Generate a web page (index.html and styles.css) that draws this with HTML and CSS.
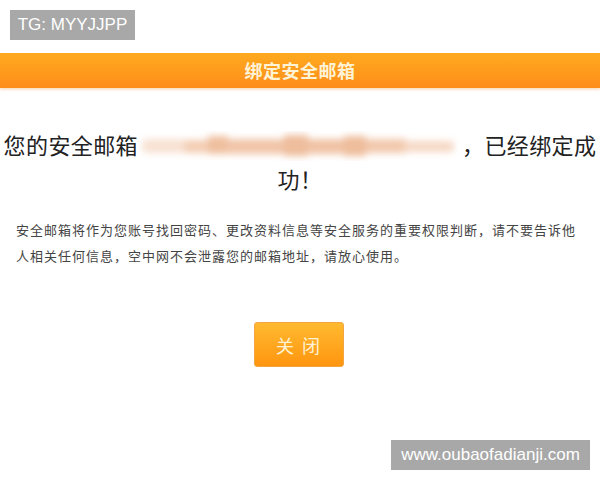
FILE: index.html
```html
<!DOCTYPE html>
<html lang="zh">
<head>
<meta charset="utf-8">
<title>绑定安全邮箱</title>
<link rel="stylesheet" href="styles.css">
</head>
<body>
<div class="page">
  <div class="tag tag-top">TG: MYYJJPP</div>
  <div class="header">绑定安全邮箱</div>
  <div class="content">
    <p class="headline">您的安全邮箱<span class="email" aria-label="（已隐藏邮箱）"><svg class="email-blur" width="324" height="30" viewBox="0 0 324 30" aria-hidden="true"><defs><filter id="b" x="-10%" y="-60%" width="120%" height="220%"><feGaussianBlur stdDeviation="3.5"/></filter></defs><g filter="url(#b)"><rect x="4" y="8" width="44" height="14" rx="5" fill="#f8e2d3"/><rect x="46" y="9" width="26" height="13" fill="#f3cdb3"/><rect x="70" y="5" width="20" height="18" fill="#efbf9f"/><rect x="88" y="8" width="60" height="15" fill="#f1c5a8"/><rect x="146" y="4" width="24" height="21" fill="#eebd9c"/><rect x="168" y="8" width="40" height="15" fill="#f0c2a4"/><rect x="206" y="5" width="22" height="20" fill="#eebd9c"/><rect x="228" y="8" width="40" height="14" fill="#f2c8ac"/><rect x="266" y="10" width="50" height="11" rx="4" fill="#f6d8c4"/></g></svg></span>，已经绑定成功！</p>
    <p class="note">安全邮箱将作为您账号找回密码、更改资料信息等安全服务的重要权限判断，请不要告诉他人相关任何信息，空中网不会泄露您的邮箱地址，请放心使用。</p>
    <div class="actions"><button class="btn">关 闭</button></div>
  </div>
  <div class="tag tag-bottom">www.oubaofadianji.com</div>
</div>
</body>
</html>
```
FILE: styles.css
```css
html, body {
  margin: 0;
  padding: 0;
  background: #ffffff;
}
.page {
  position: relative;
  width: 600px;
  height: 480px;
  overflow: hidden;
  padding-top: 53px;
  box-sizing: border-box;
  font-family: "Noto Sans CJK SC", "Liberation Sans", sans-serif;
}
.tag {
  position: absolute;
  background: #a8a8a8;
  color: #ffffff;
  font-family: "Liberation Sans", Arial, sans-serif;
  font-size: 17px;
  line-height: 30px;
  height: 30px;
  box-sizing: border-box;
  text-align: center;
}
.tag-top {
  left: 10px;
  top: 10px;
  width: 125px;
}
.tag-bottom {
  left: 391px;
  top: 440px;
  width: 199px;
}
.header {
  height: 35px;
  line-height: 34px;
  text-align: center;
  background: linear-gradient(#ffaa1f, #fe8d1a);
  color: #fff3d6;
  font-size: 18px;
  font-weight: bold;
  letter-spacing: 0.5px;
  box-shadow: 0 2px 2px rgba(240, 170, 90, 0.35);
}
.content {
  padding: 0 2px;
}
.headline {
  margin: 39px 0 0;
  font-size: 22px;
  letter-spacing: 0.4px;
  line-height: 34px;
  color: #222222;
  text-align: center;
}
.email {
  display: inline-block;
  width: 324px;
  height: 30px;
  vertical-align: -7px;
}
.email-blur {
  display: block;
}
.note {
  margin: 22px 0 0 14px;
  width: 570px;
  font-size: 13px;
  letter-spacing: 1px;
  line-height: 26px;
  color: #444444;
}
.actions {
  display: flex;
  justify-content: center;
  margin-top: 53px;
  padding-right: 2px;
}
.btn {
  width: 90px;
  height: 45px;
  border: 1px solid #f3a640;
  border-radius: 3px;
  background: linear-gradient(#ffba30, #ff9510);
  color: #fff2d4;
  font-family: "Noto Sans CJK SC", sans-serif;
  font-size: 18px;
  letter-spacing: 2px;
  padding: 0;
}
```
